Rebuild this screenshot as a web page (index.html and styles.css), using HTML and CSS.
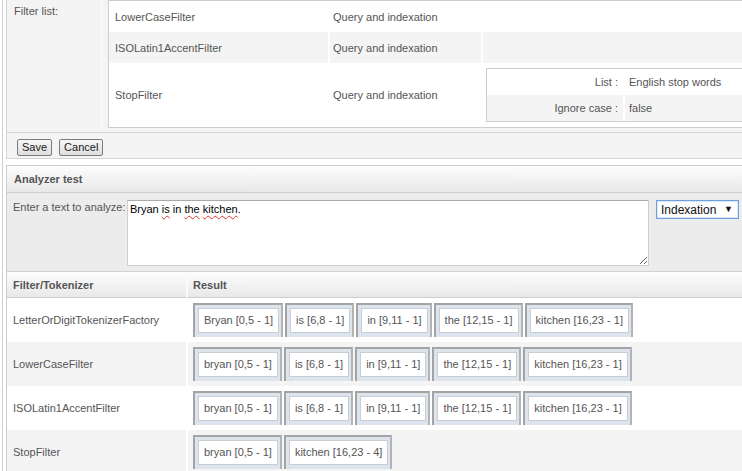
FILE: index.html
```html
<!DOCTYPE html>
<html>
<head>
<meta charset="utf-8">
<title>Analyzer</title>
<link rel="stylesheet" href="styles.css">
</head>
<body>
<div class="page">
  <div class="form">
    <div class="form-row">
      <div class="form-label">Filter list:</div>
      <div class="form-value">
        <table class="filters">
          <colgroup><col class="c1"><col class="c2"><col></colgroup>
          <tr class="f-row r-short"><td class="f-cell">LowerCaseFilter</td><td class="f-cell f-next">Query and indexation</td><td class="f-cell f-next"></td></tr>
          <tr class="f-row r-short f-alt"><td class="f-cell">ISOLatin1AccentFilter</td><td class="f-cell f-next">Query and indexation</td><td class="f-cell f-next"></td></tr>
          <tr class="f-row r-tall"><td class="f-cell">StopFilter</td><td class="f-cell f-next">Query and indexation</td><td class="f-cell f-next params-cell">
            <table class="params">
              <colgroup><col class="p1"><col></colgroup>
              <tr><th class="p-key">List :</th><td class="p-val">English stop words</td></tr>
              <tr class="p-alt"><th class="p-key">Ignore case :</th><td class="p-val">false</td></tr>
            </table>
          </td></tr>
        </table>
      </div>
    </div>
    <div class="form-actions">
      <button class="btn">Save</button>
      <button class="btn">Cancel</button>
    </div>
  </div>

  <div class="analyzer">
    <div class="panel-head">Analyzer test</div>
    <div class="input-row">
      <div class="input-label">Enter a text to analyze:</div>
      <div class="textbox" contenteditable="true" spellcheck="false">Bryan <span class="sp">is</span> in <span class="sp">the</span> <span class="sp">kitchen</span>.</div>
      <div class="select-wrap">
        <select class="select"><option>Indexation</option><option>Query</option></select>
        <span class="arrow">&#9660;</span>
      </div>
    </div>
    <table class="results">
      <colgroup><col class="rc1"><col></colgroup>
      <thead>
        <tr><th>Filter/Tokenizer</th><th class="res-h">Result</th></tr>
      </thead>
      <tbody>
        <tr>
          <td>LetterOrDigitTokenizerFactory</td>
          <td class="res"><div class="tokens">
            <span class="tok"><span class="tok-in">Bryan [0,5 - 1]</span></span>
            <span class="tok"><span class="tok-in">is [6,8 - 1]</span></span>
            <span class="tok"><span class="tok-in">in [9,11 - 1]</span></span>
            <span class="tok"><span class="tok-in">the [12,15 - 1]</span></span>
            <span class="tok"><span class="tok-in">kitchen [16,23 - 1]</span></span>
          </div></td>
        </tr>
        <tr>
          <td>LowerCaseFilter</td>
          <td class="res"><div class="tokens">
            <span class="tok"><span class="tok-in">bryan [0,5 - 1]</span></span>
            <span class="tok"><span class="tok-in">is [6,8 - 1]</span></span>
            <span class="tok"><span class="tok-in">in [9,11 - 1]</span></span>
            <span class="tok"><span class="tok-in">the [12,15 - 1]</span></span>
            <span class="tok"><span class="tok-in">kitchen [16,23 - 1]</span></span>
          </div></td>
        </tr>
        <tr>
          <td>ISOLatin1AccentFilter</td>
          <td class="res"><div class="tokens">
            <span class="tok"><span class="tok-in">bryan [0,5 - 1]</span></span>
            <span class="tok"><span class="tok-in">is [6,8 - 1]</span></span>
            <span class="tok"><span class="tok-in">in [9,11 - 1]</span></span>
            <span class="tok"><span class="tok-in">the [12,15 - 1]</span></span>
            <span class="tok"><span class="tok-in">kitchen [16,23 - 1]</span></span>
          </div></td>
        </tr>
        <tr>
          <td>StopFilter</td>
          <td class="res"><div class="tokens">
            <span class="tok"><span class="tok-in">bryan [0,5 - 1]</span></span>
            <span class="tok"><span class="tok-in">kitchen [16,23 - 4]</span></span>
          </div></td>
        </tr>
      </tbody>
    </table>
  </div>
</div>
</body>
</html>
```

FILE: styles.css
```css
html, body {
  margin: 0;
  padding: 0;
  overflow: hidden;
  background: #fff;
}

body {
  font-family: "Liberation Sans", Arial, sans-serif;
  font-size: 11px;
  color: #555;
}

.page {
  width: 800px;
  margin-left: 2px;
  border-left: 1px solid #cfcfcf;
  padding-left: 3px;
}

/* ---------- top form ---------- */
.form {
  border: 1px solid #d6d6d6;
  border-top: none;
}

.form-row {
  display: flex;
  background: #f4f4f4;
  border-bottom: 1px solid #d6d6d6;
}

.form-label {
  width: 94px;
  flex: none;
  box-sizing: border-box;
  padding: 5px 7px;
  line-height: 13px;
}

.form-value {
  flex: 1;
  min-width: 0;
  border-left: 1px solid #fbfbfb;
  padding: 0 6px 4px 6px;
}

.filters {
  width: 100%;
  table-layout: fixed;
  border-collapse: separate;
  border-spacing: 0;
  border: 1px solid #cdcdcd;
  background: #fff;
}

.filters col.c1 { width: 219px; }
.filters col.c2 { width: 153px; }

.f-cell {
  padding: 0 0 0 6px;
  vertical-align: middle;
  white-space: nowrap;
}

.f-cell.f-next {
  border-left: 2px solid #fff;
  padding-left: 3px;
}

.r-short > .f-cell { height: 31px; }
.r-tall > .f-cell { height: 64px; }
.f-alt > .f-cell { background: #f4f4f4; }

.f-cell.params-cell {
  padding: 0 0 0 3px;
}

.params {
  width: 100%;
  table-layout: fixed;
  border-collapse: separate;
  border-spacing: 0;
  border: 1px solid #cdcdcd;
}

.params col.p1 { width: 136px; }

.p-key,
.p-val {
  height: 26px;
  padding: 0;
  font-weight: normal;
  vertical-align: middle;
  white-space: nowrap;
}

.p-key {
  text-align: right;
  padding-right: 5px;
}

.p-val {
  border-left: 2px solid #fff;
  padding-left: 4px;
}

.p-alt > .p-key,
.p-alt > .p-val { background: #f4f4f4; }

.form-actions {
  display: flex;
  gap: 7px;
  padding: 6px 10px 2px 10px;
  background: #f4f4f4;
  height: 17px;
}

.btn {
  height: 17px;
  padding: 0 4px;
  margin: 0;
  font-family: "Liberation Sans", Arial, sans-serif;
  font-size: 11px;
  line-height: 15px;
  color: #1a1a1a;
  background: linear-gradient(#f7f7f7, #dedede);
  border: 1px solid #7c7c7c;
  border-radius: 2px;
}

/* ---------- analyzer ---------- */
.analyzer {
  margin-top: 6px;
  border: 1px solid #cdcdcd;
}

.panel-head {
  height: 26px;
  line-height: 26px;
  padding-left: 7px;
  font-weight: bold;
  background: linear-gradient(#fdfdfd, #e8e8e8);
  border-bottom: 1px solid #cdcdcd;
}

.input-row {
  display: flex;
  align-items: flex-start;
  background: #ececec;
  padding: 7px 0 5px 0;
  border-bottom: 1px solid #d2d2d2;
}

.input-label {
  width: 120px;
  flex: none;
  box-sizing: border-box;
  padding-left: 6px;
  line-height: 13px;
  margin-top: 1px;
}

.textbox {
  width: 522px;
  height: 66px;
  flex: none;
  box-sizing: border-box;
  padding: 2px 2px;
  background: #fff;
  border: 1px solid #cfcfcf;
  border-top-color: #a9a9a9;
  color: #000;
  font-size: 11px;
  line-height: 13px;
  resize: both;
  overflow: auto;
  outline: none;
}

.sp {
  text-decoration: underline wavy #e03030;
  text-decoration-thickness: 1px;
  text-underline-offset: 2px;
}

.select-wrap {
  position: relative;
  margin-left: 7px;
  width: 83px;
  height: 19px;
  flex: none;
}

.select {
  appearance: none;
  -webkit-appearance: none;
  width: 100%;
  height: 100%;
  margin: 0;
  box-sizing: border-box;
  padding: 0 0 0 4px;
  font-family: "Liberation Sans", Arial, sans-serif;
  font-size: 12px;
  color: #111;
  background: #fff;
  border: 1px solid #6f9fdf;
  border-radius: 0;
  box-shadow: inset 0 0 0 1px #dbe8f8;
  outline: none;
}

.arrow {
  position: absolute;
  right: 6px;
  top: 4px;
  font-size: 9px;
  line-height: 10px;
  color: #111;
  pointer-events: none;
}

.results {
  width: 100%;
  table-layout: fixed;
  border-collapse: separate;
  border-spacing: 0;
}

.results col.rc1 { width: 179px; }

.results thead th {
  height: 25px;
  padding: 0 0 0 6px;
  text-align: left;
  font-weight: bold;
  background: linear-gradient(#fdfdfd, #e8e8e8);
  border-bottom: 1px solid #cdcdcd;
}

.results thead th.res-h {
  border-left: 2px solid #fafafa;
  padding-left: 5px;
}

.results tbody td {
  height: 34px;
  padding: 5px 0 5px 6px;
  vertical-align: middle;
  white-space: nowrap;
}

.results tbody td.res {
  border-left: 2px solid #fff;
  padding-left: 5px;
}

.results tbody tr:nth-child(even) td {
  background: #f4f4f4;
}

.tokens {
  display: flex;
  gap: 2px;
}

.tok {
  display: inline-flex;
  padding: 3px 2px 4px 3px;
  background: #dce4ee;
  border-left: 2px solid #a4a4a4;
  border-top: 2px solid #a4a4a4;
  border-right: 2px solid #b4b4b4;
}

.tok-in {
  display: inline-block;
  height: 25px;
  box-sizing: border-box;
  line-height: 23px;
  padding: 0 5px;
  background: #fff;
  border: 1px solid #c9ced6;
  color: #555;
}
```
